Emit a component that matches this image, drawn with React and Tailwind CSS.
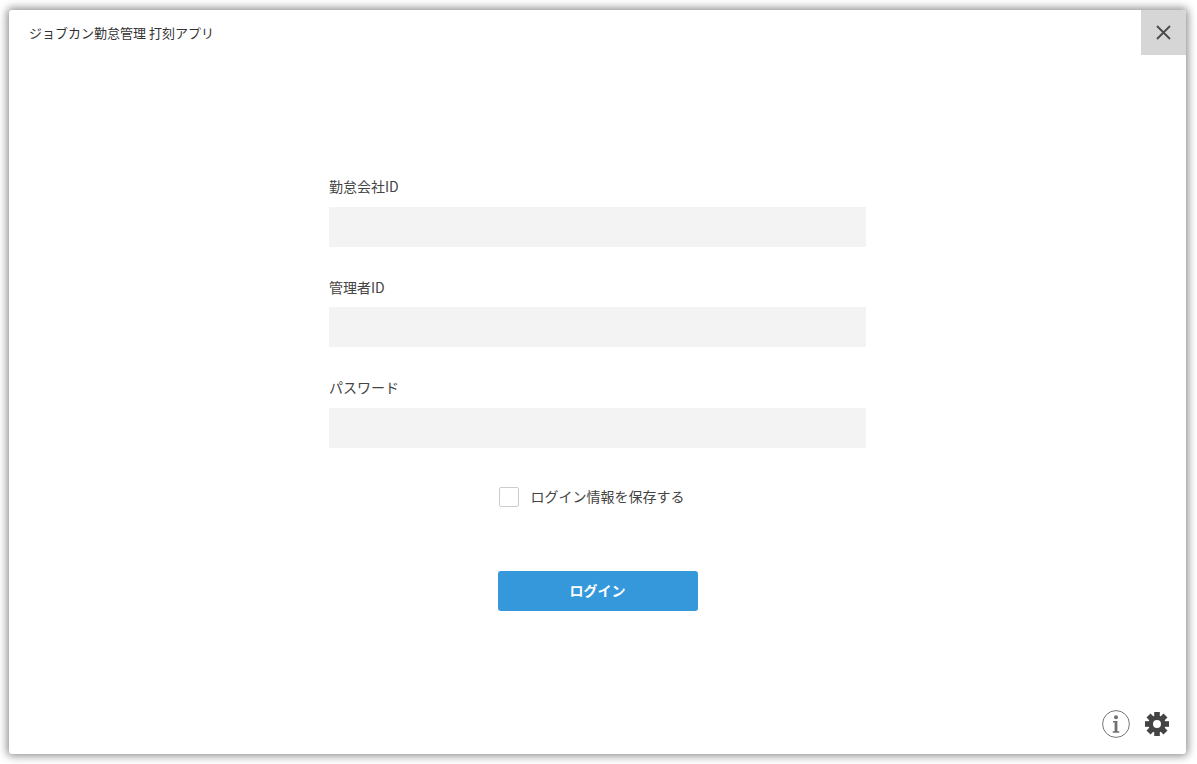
import React from "react";

const FONT = "font-['Noto_Sans_CJK_JP','Noto_Sans',sans-serif]";
const TEETH = [0, 45, 90, 135, 180, 225, 270, 315];

function Field({ label, type = "text", className = "", labelClass = "" }) {
  return (
    <label className={`block ${className}`}>
      <span className={`block h-[21px] text-[14px] leading-[21px] text-[#444] ${labelClass}`}>{label}</span>
      <input type={type} className="mt-[9px] block h-10 w-full bg-[#f3f3f3] px-3 text-sm outline-none" />
    </label>
  );
}

function InfoIcon() {
  return (
    <svg width="28" height="28" viewBox="0 0 28 28" fill="none">
      <circle cx="14" cy="14" r="13.4" stroke="#777" strokeWidth="1" />
      <circle cx="14" cy="7.2" r="2" fill="#707070" />
      <path d="M11 11h4.4v10.2h1.9v1.5h-6.6v-1.5h1.9v-8.7h-1.6z" fill="#707070" />
    </svg>
  );
}

function GearIcon() {
  return (
    <svg width="26" height="26" viewBox="0 0 26 26" fill="none">
      {TEETH.map((deg) => (
        <rect key={deg} x="10.2" y="1" width="5.6" height="6" fill="#444" transform={`rotate(${deg} 13 13)`} />
      ))}
      <circle cx="13" cy="13" r="6.3" stroke="#444" strokeWidth="4.6" />
    </svg>
  );
}

export default function App() {
  return (
    <div className={`h-[764px] w-[1197px] bg-white pt-[10px] pr-[11px] pb-[10px] pl-[9px] ${FONT}`}>
      <div className="flex h-full flex-col rounded-[3px] bg-white shadow-[0_0_8px_2px_rgba(0,0,0,0.45)]">
        <header className="flex h-[45px] items-start justify-between">
          <h1 className="pt-[13px] pl-[20px] text-[13px] leading-[19px] font-normal text-[#333]">
            ジョブカン勤怠管理 打刻アプリ
          </h1>
          <button className="flex h-[45px] w-[45px] items-center justify-center rounded-tr-[3px] bg-[#d6d6d6]">
            <svg width="15" height="15" viewBox="0 0 15 15" fill="none">
              <path d="M1 1l13 13M14 1L1 14" stroke="#4a4a4a" strokeWidth="1.8" />
            </svg>
          </button>
        </header>

        <main className="flex-1">
          <form className="mx-auto mt-[122px] w-[537px]">
            <Field label="勤怠会社ID" labelClass="-translate-y-px" />
            <Field label="管理者ID" className="mt-[30px]" />
            <Field label="パスワード" type="password" className="mt-[31px]" labelClass="-translate-y-px" />

            <label className="mt-[39px] flex items-center justify-center pr-[12px]">
              <span className="h-5 w-5 rounded-[2px] border border-[#ccc] bg-white" />
              <span className="ml-3 -translate-y-px text-[14px] leading-5 text-[#444]">ログイン情報を保存する</span>
            </label>

            <button
              type="button"
              className="mx-auto mt-[64px] block h-10 w-[200px] rounded-[3px] bg-[#3498db] pb-[2px] text-[14px] font-bold text-white"
            >
              ログイン
            </button>
          </form>
        </main>

        <footer className="flex items-center justify-end gap-[14px] pr-[16px] pb-[16px]">
          <InfoIcon />
          <GearIcon />
        </footer>
      </div>
    </div>
  );
}
